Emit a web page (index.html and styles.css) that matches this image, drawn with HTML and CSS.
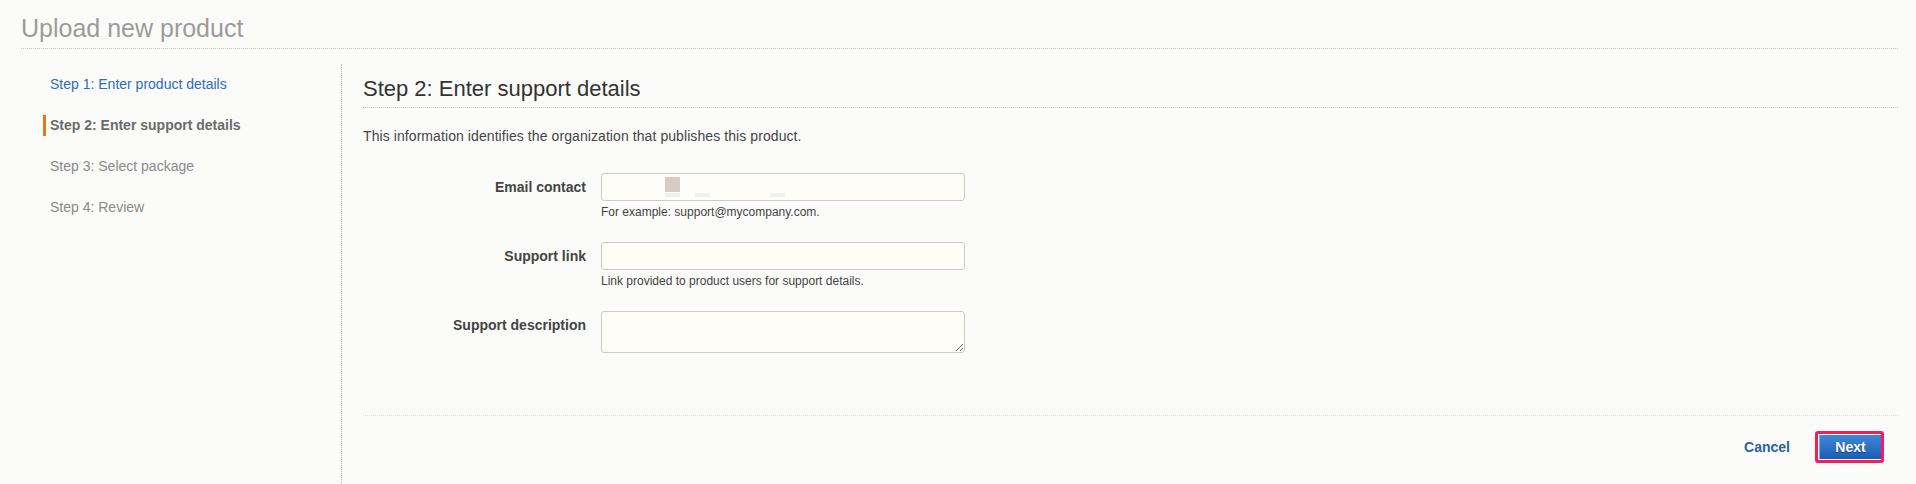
FILE: index.html
```html
<!DOCTYPE html>
<html lang="en">
<head>
    <meta charset="UTF-8">
    <title>Upload new product</title>
    <link rel="stylesheet" href="styles.css">
</head>
<body>
    <div class="page">
        <h1 class="page-title">Upload new product</h1>

        <div class="wizard">
            <ul class="steps">
                <li class="step done"><a href="#">Step 1: Enter product details</a></li>
                <li class="step current">Step 2: Enter support details</li>
                <li class="step">Step 3: Select package</li>
                <li class="step">Step 4: Review</li>
            </ul>

            <div class="panel">
                <h2 class="panel-title">Step 2: Enter support details</h2>
                <p class="intro">This information identifies the organization that publishes this product.</p>

                <form class="form">
                    <div class="row">
                        <label class="label" for="email">Email contact</label>
                        <div class="field">
                            <div class="input-wrap">
                                <input class="input" id="email" type="text">
                                <span class="redact"></span>
                                <span class="redact faint r1"></span>
                                <span class="redact faint r2"></span>
                                <span class="redact faint r3"></span>
                            </div>
                            <div class="hint">For example: support@mycompany.com.</div>
                        </div>
                    </div>
                    <div class="row">
                        <label class="label" for="link">Support link</label>
                        <div class="field">
                            <input class="input" id="link" type="text">
                            <div class="hint">Link provided to product users for support details.</div>
                        </div>
                    </div>
                    <div class="row">
                        <label class="label" for="desc">Support description</label>
                        <div class="field">
                            <textarea class="input textarea" id="desc"></textarea>
                        </div>
                    </div>
                </form>

                <div class="actions">
                    <a href="#" class="cancel">Cancel</a>
                    <span class="next-frame"><button type="button" class="next">Next</button></span>
                </div>
            </div>
        </div>
    </div>
</body>
</html>
```

FILE: styles.css
```css
body {
    margin: 0;
    background-color: #fbfcfa;
    font-family: "Liberation Sans", Arial, sans-serif;
    color: #444;
}

.page {
    padding: 0 18px 0 21px;
}

.page-title {
    margin: 0;
    padding: 13px 0 5px;
    font-size: 25px;
    line-height: 30px;
    font-weight: normal;
    color: #9b9b9b;
    border-bottom: 1px dotted #c4c4c4;
}

.wizard {
    display: flex;
    margin-top: 15px;
    min-height: 420px;
}

/* Левая колонка с шагами */
.steps {
    list-style: none;
    margin: 0;
    padding: 10px 0 0 22px;
    width: 298px;
    border-right: 1px dotted #b9b9b9;
}

.step {
    border-left: 3px solid transparent;
    padding-left: 4px;
    font-size: 14px;
    line-height: 21px;
    margin-bottom: 20px;
    color: #8a8a8a;
}

.step a {
    color: #2f6db6;
    text-decoration: none;
}

.step.current {
    border-left-color: #e47911;
    font-weight: bold;
    color: #6b6b6b;
}

/* Правая часть */
.panel {
    flex: 1;
    padding: 12px 0 0 21px;
}

.panel-title {
    margin: 0;
    padding-bottom: 5px;
    font-size: 22px;
    line-height: 26px;
    font-weight: normal;
    color: #333;
    border-bottom: 1px dotted #c4c4c4;
}

.intro {
    margin: 19px 0 0;
    font-size: 14px;
    line-height: 18px;
    letter-spacing: 0.08px;
    color: #444;
}

.form {
    margin-top: 28px;
    padding-bottom: 62px;
    border-bottom: 1px dotted #e9ddd2;
}

.row {
    display: flex;
    gap: 15px;
    margin-bottom: 22px;
}

.row:last-child {
    margin-bottom: 0;
}

.label {
    width: 223px;
    text-align: right;
    font-size: 14px;
    line-height: 28px;
    font-weight: bold;
    color: #444;
}

.field {
    width: 364px;
}

.input-wrap {
    position: relative;
}

.input {
    display: block;
    box-sizing: border-box;
    width: 364px;
    height: 28px;
    margin: 0;
    border: 1px solid #cacaca;
    border-radius: 3px;
    background-color: #fffdf7;
    font-family: inherit;
    font-size: 14px;
}

.textarea {
    height: 42px;
    resize: both;
}

/* замазанный адрес в поле email */
.redact {
    position: absolute;
    left: 64px;
    top: 4px;
    width: 15px;
    height: 15px;
    background-color: #d9cac4;
}

.redact.faint {
    top: 20px;
    height: 4px;
    background-color: #eef1ef;
}

.redact.r2 { left: 94px; }
.redact.r3 { left: 169px; }

.hint {
    margin-top: 3px;
    font-size: 12px;
    line-height: 16px;
    color: #444;
}

.actions {
    display: flex;
    justify-content: flex-end;
    align-items: center;
    gap: 25px;
    padding: 15px 14px 0 0;
}

.cancel {
    font-size: 14px;
    font-weight: bold;
    color: #2a5ea8;
    text-decoration: none;
}

.next-frame {
    display: inline-block;
    border: 3px solid #f51b5d;
    border-radius: 3px;
    padding: 1px 0 1px 1px;
    background-color: #fff;
}

.next {
    display: block;
    width: 62px;
    height: 24px;
    border: none;
    border-left: 1px solid #7fb0ea;
    background: linear-gradient(to bottom, #3f86d9, #1c5db3);
    color: #fff;
    font-family: inherit;
    font-size: 14px;
    font-weight: bold;
    text-shadow: 0 1px 1px rgba(0, 0, 0, 0.4);
    cursor: pointer;
}
```
